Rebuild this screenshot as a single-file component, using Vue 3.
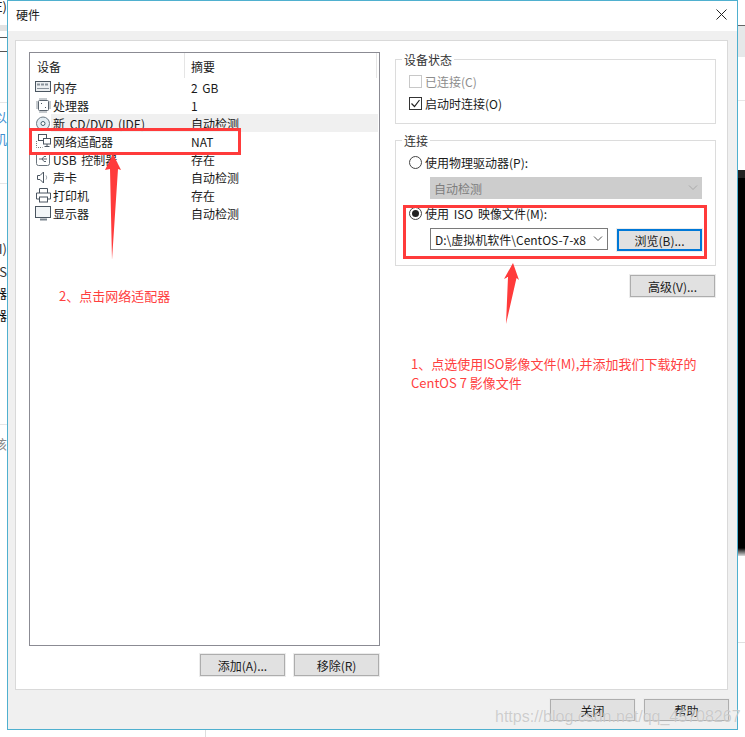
<script setup>
const devices = [
  { icon: 'mem', name: '内存', sum: '2 GB' },
  { icon: 'cpu', name: '处理器', sum: '1' },
  { icon: 'cd', name: '新 CD/DVD (IDE)', sum: '自动检测', sel: true },
  { icon: 'net', name: '网络适配器', sum: 'NAT' },
  { icon: 'usb', name: 'USB 控制器', sum: '存在' },
  { icon: 'snd', name: '声卡', sum: '自动检测' },
  { icon: 'prn', name: '打印机', sum: '存在' },
  { icon: 'mon', name: '显示器', sum: '自动检测' }
]
const fragments = [
  { text: '(E)', top: -2, color: '#222' },
  { text: '以', top: 108, color: '#3f8fd0' },
  { text: '机', top: 130, color: '#3f8fd0' },
  { text: 'I)', top: 240, color: '#333' },
  { text: '(S', top: 263, color: '#333' },
  { text: '器', top: 284, color: '#111' },
  { text: '器', top: 306, color: '#111' },
  { text: '该', top: 435, color: '#888' }
]
const rules = [
  { top: 25, height: 6, color: '#e2e2e2' },
  { top: 37, height: 1, color: '#555' },
  { top: 51, height: 1, color: '#555' },
  { top: 102, height: 1, color: '#e6e6e6' },
  { top: 183, height: 1, color: '#e6e6e6' },
  { top: 424, height: 1, color: '#e6e6e6' }
]
</script>

<template>
  <div class="screen">
    <div class="back-left">
      <i v-for="r in rules" :key="r.top" class="rule" :style="{ top: r.top + 'px', height: r.height + 'px', background: r.color }"></i>
      <span v-for="f in fragments" :key="f.top" class="frag" :style="{ top: f.top + 'px', color: f.color }">{{ f.text }}</span>
    </div>
    <div class="back-right">
      <div class="br-gap1"></div>
      <div class="br-band"></div>
      <div class="br-gap2"></div>
      <div class="br-gap3"></div>
      <div class="br-dark"></div>
      <div class="br-gap4"></div>
    </div>
    <i class="tick"></i>

    <div class="window">
      <div class="title"><span>硬件</span>
        <svg class="close" width="11" height="11" viewBox="0 0 11 11"><path d="M.5.5l10 10M10.500.5l-10 10" stroke="#222" fill="none"/></svg>
      </div>
      <div class="body">
        <div class="panel">
          <div class="left">
            <div class="list">
              <div class="head"><div class="c1">设备</div><div class="c2">摘要</div></div>
              <div v-for="d in devices" :key="d.name" class="row" :class="{ sel: d.sel }">
                <div class="c1 dev">
                  <svg class="ic" width="17" height="17" viewBox="0 0 17 17" fill="none" stroke="#4a5560">
                    <g v-if="d.icon === 'mem'"><rect x=".5" y="2.500" width="15" height="10" fill="#eceff1"/><path d="M2 5.500h12" stroke="#8a939c" stroke-width="2" stroke-dasharray="3 1"/><path d="M2 9.500h12" stroke="#8a939c"/></g>
                    <g v-else-if="d.icon === 'cpu'"><rect x="3.500" y="3.500" width="10" height="10" rx="1" stroke="#5a646e"/><path d="M1 5h2M1 7h2M1 9h2M1 11h2M14 5h2M14 7h2M14 9h2M14 11h2M5 1v2M7 1v2M9 1v2M11 1v2M5 14v2M7 14v2M9 14v2M11 14v2" stroke="#8d969e"/><path d="M6 6h1v1H6zM10 10h1v1h-1z" fill="#4a5560" stroke="none"/></g>
                    <g v-else-if="d.icon === 'cd'"><circle cx="8" cy="8.500" r="6.500" fill="#e3edf3" stroke="#6c7a85"/><circle cx="8" cy="8.500" r="2" fill="#fff" stroke="#44616f"/></g>
                    <g v-else-if="d.icon === 'net'"><rect x="3.500" y="1.500" width="8" height="6" fill="#fff"/><rect x="8.500" y="5.500" width="7" height="5.500" fill="#fff"/><path d="M12 11v2M9.500 13.500h5"/><path d="M1.500 8v6.500h6" stroke-dasharray="1 1" stroke="#777"/></g>
                    <g v-else-if="d.icon === 'usb'"><rect x="1.500" y="1.500" width="13" height="13" rx="2" stroke="#6a747d"/><path d="M4 8h8M7 8l2-2.500h2M7 8l2 2.500h2" stroke="#5a646e"/></g>
                    <g v-else-if="d.icon === 'snd'"><path d="M2.500 6.500v4h2.500l3.500 3.500v-11l-3.500 3.500z"/><path d="M11 6.500c.8 1 .8 3 0 4" stroke="#8a939c"/></g>
                    <g v-else-if="d.icon === 'prn'"><path d="M4.500 6V1.500h8V6M4.500 12h-3V6h14v6h-3"/><rect x="4.500" y="10" width="8" height="5" fill="#fff"/></g>
                    <g v-else><rect x=".5" y="1.500" width="15" height="11" fill="#f2f5f7"/><path d="M5 14.500h7" stroke="#7b858e" stroke-width="2"/></g>
                  </svg>
                  <span>{{ d.name }}</span>
                </div>
                <div class="c2">{{ d.sum }}</div>
              </div>
            </div>
            <div class="list-actions">
              <button class="btn">添加(A)...</button>
              <button class="btn">移除(R)</button>
            </div>
          </div>
          <div class="right">
            <fieldset class="group status">
              <legend>设备状态</legend>
              <label class="opt muted"><span class="check off"></span>已连接(C)</label>
              <label class="opt"><span class="check"><svg width="11" height="11" viewBox="0 0 11 11"><path d="M1.500 5.500l3 3 5-6.500" fill="none" stroke="#222" stroke-width="1.200"/></svg></span>启动时连接(O)</label>
            </fieldset>
            <fieldset class="group conn">
              <legend>连接</legend>
              <label class="opt"><span class="radio"></span>使用物理驱动器(P):</label>
              <div class="select disabled"><span>自动检测</span>
                <svg width="10" height="6" viewBox="0 0 10 6"><path d="M1 .5l4 4 4-4" fill="none" stroke="#a8a8a8"/></svg>
              </div>
              <label class="opt iso"><span class="radio on"></span>使用 ISO 映像文件(M):</label>
              <div class="iso-row">
                <div class="select file"><span>D:\虚拟机软件\CentOS-7-x8</span>
                  <svg width="10" height="6" viewBox="0 0 10 6"><path d="M1 .5l4 4 4-4" fill="none" stroke="#555"/></svg>
                </div>
                <button class="btn browse">浏览(B)...</button>
              </div>
            </fieldset>
            <div class="adv-row"><button class="btn">高级(V)...</button></div>
          </div>
        </div>
        <div class="footer">
          <button class="btn">关闭</button>
          <button class="btn">帮助</button>
        </div>
      </div>
    </div>

    <div class="mark box-net"></div>
    <div class="mark box-iso"></div>
    <svg class="arrow arrow-net" width="18" height="106" viewBox="0 0 18 106"><path d="M9 0L17 16L14 15L8 106L6 15L1 16Z" fill="#ff3b3b"/></svg>
    <svg class="arrow arrow-iso" width="17" height="63" viewBox="0 0 17 63"><path d="M10 1L16 18L13.500 16L3 62L5 15L1 17Z" fill="#ff3b3b"/></svg>
    <div class="note note-2">2、点击网络适配器</div>
    <div class="note note-1">1、点选使用ISO影像文件(M),并添加我们下载好的<br>CentOS 7 影像文件</div>
    <div class="watermark">https://blog.csdn.net/qq_45708267</div>
  </div>
</template>

<style>
html, body { margin: 0; background: #fff; }
</style>

<style scoped>
.screen {
  position: relative;
  width: 745px;
  height: 737px;
  overflow: hidden;
  background: #fff;
  font-family: "Noto Sans CJK SC", "Liberation Sans", sans-serif;
  font-size: 12px;
  color: #1a1a1a;
}
.back-left {
  position: absolute;
  left: 0;
  top: 0;
  width: 7px;
  height: 737px;
  overflow: hidden;
}
.rule { position: absolute; left: 0; right: 0; }
.frag {
  position: absolute;
  right: 0;
  font-size: 13px;
  line-height: 18px;
  white-space: nowrap;
}
.back-right {
  position: absolute;
  left: 738px;
  top: 0;
  width: 7px;
  height: 737px;
  display: flex;
  flex-direction: column;
}
.br-gap1 { height: 25px; }
.br-band { height: 32px; background: #e6e8e9; border-top: 1px solid #666; box-sizing: border-box; }
.br-gap2 { height: 44px; border-bottom: 1px solid #e6e6e6; box-sizing: border-box; }
.br-gap3 { height: 69px; }
.br-dark { height: 386px; background: linear-gradient(#222 0 8px, #000 8px 378px, #ddd 386px); }
.br-gap4 { height: 87px; border-bottom: 1px solid #e0e0e0; box-sizing: border-box; }
.tick { position: absolute; left: 205px; top: 730px; width: 1px; height: 7px; background: #ddd; }
.window {
  position: relative;
  box-sizing: border-box;
  width: 731px;
  height: 730px;
  margin-left: 7px;
  border: 1px solid #4fb0cf;
  background: #f0f0f0;
  display: flex;
  flex-direction: column;
}
.title {
  box-sizing: border-box;
  height: 30px;
  flex: none;
  background: #fff;
  display: flex;
  align-items: center;
  justify-content: space-between;
  padding: 0 10px 3px 8px;
  font-size: 12px;
}
.body { flex: 1; display: flex; flex-direction: column; padding: 9px 9px 0 7px; min-height: 0; }
.panel {
  box-sizing: border-box;
  height: 650px;
  background: #fff;
  border: 1px solid #d9d9d9;
  display: flex;
  padding: 11px 11px 0 13px;
  gap: 15px;
}
.left { width: 351px; flex: none; }
.list {
  box-sizing: border-box;
  height: 594px;
  border: 1px solid #8b8b93;
  background: #fff;
}
.head { display: flex; height: 25px; align-items: center; margin-right: 2px; }
.head .c2 { box-sizing: border-box; border-left: 1px solid #e5e5e5; border-right: 1px solid #e5e5e5; height: 100%; display: flex; align-items: center; padding: 2px 0 0 6px; }
.head .c1 { padding: 2px 0 0 7px; }
.c1 { box-sizing: border-box; width: 154px; flex: none; }
.c2 { flex: 1; padding-left: 7px; word-spacing: 2px; }
.row { display: flex; align-items: center; height: 18px; margin-right: 1px; }
.row.sel { background: linear-gradient(90deg, #fff 21px, #f0f0f0 21px); }
.dev { display: flex; align-items: center; padding-left: 5px; gap: 1px; white-space: nowrap; word-spacing: 2px; }
.ic { flex: none; }
.list-actions { display: flex; justify-content: flex-end; gap: 9px; margin-top: 8px; padding-right: 1px; }
.btn {
  box-sizing: border-box;
  width: 85px;
  height: 22px;
  padding: 0;
  border: 1px solid #adadad;
  outline: 1px solid #ececec;
  background: #e1e1e1;
  font: inherit;
  color: #1a1a1a;
}
.right { flex: 1; min-width: 0; }
.group {
  margin: 0;
  padding: 0;
  border: 1px solid #dcdcdc;
  min-inline-size: 0;
}
legend { padding: 0 2px; margin-left: -7px; line-height: 15px; color: #333; }
.status { box-sizing: content-box; height: 67px; padding: 3px 0 0 13px; }
.conn { box-sizing: content-box; height: 128px; margin-top: 9px; padding: 3px 0 0 13px; }
.opt { display: flex; align-items: center; gap: 3px; height: 22px; }
.muted { color: #8d8d8d; }
.check {
  box-sizing: border-box;
  width: 13px;
  height: 13px;
  border: 1px solid #333;
  background: #fff;
  display: flex;
}
.check.off { border-color: #c8c8c8; }
.radio {
  box-sizing: border-box;
  width: 13px;
  height: 13px;
  border: 1px solid #444;
  border-radius: 50%;
  background: #fff;
  position: relative;
}
.radio.on::after {
  content: "";
  position: absolute;
  inset: 2px;
  border-radius: 50%;
  background: #222;
}
.select {
  box-sizing: border-box;
  height: 22px;
  display: flex;
  align-items: center;
  justify-content: space-between;
  padding: 0 4px 0 4px;
  white-space: nowrap;
  overflow: hidden;
}
.disabled { width: 272px; margin: 4px 0 0 21px; background: #cdcdcd; color: #7d7d7d; }
.iso { margin-top: 3px; word-spacing: 2px; }
.iso-row { display: flex; gap: 9px; margin: 4px 0 0 21px; }
.file { width: 178px; border: 1px solid #7a7a7a; background: #fff; padding-left: 4px; }
.browse { border: 2px solid #0078d7; width: 85px; margin-top: 1px; }
.adv-row { display: flex; justify-content: flex-end; margin-top: 9px; padding-right: 1px; }
.footer { display: flex; justify-content: flex-end; gap: 9px; margin: 9px -1px 0 0; }

.mark { position: absolute; box-sizing: border-box; border: 3px solid #ff3b3b; }
.box-net { left: 29px; top: 128px; width: 212px; height: 27px; }
.box-iso { left: 403px; top: 205px; width: 304px; height: 54px; }
.arrow { position: absolute; }
.arrow-net { left: 104px; top: 154px; }
.arrow-iso { left: 503px; top: 262px; }
.note { position: absolute; color: #ff4040; font-size: 13px; line-height: 19px; white-space: nowrap; }
.note-2 { left: 59px; top: 286px; }
.note-1 { left: 411px; top: 354px; }
.watermark {
  position: absolute;
  left: 495px;
  top: 708px;
  font-family: "Liberation Sans", sans-serif;
  font-size: 16px;
  color: rgba(175, 175, 175, .6);
  text-shadow: 0 0 1px rgba(255, 255, 255, .7);
  white-space: nowrap;
}
</style>
